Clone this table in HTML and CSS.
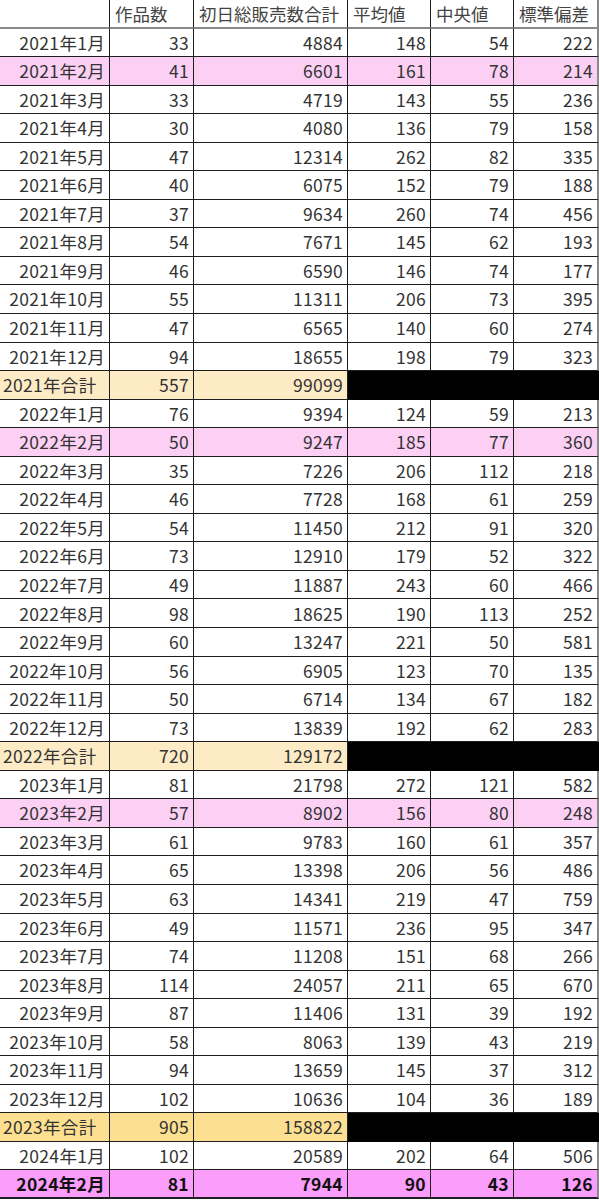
FILE: index.html
```html
<!DOCTYPE html>
<html lang="ja">
<head>
<meta charset="utf-8">
<link rel="stylesheet" href="styles.css">
</head>
<body>
<div class="sheet">
  <div class="row head"><div class="c"></div><div class="c">作品数</div><div class="c">初日総販売数合計</div><div class="c">平均値</div><div class="c">中央値</div><div class="c">標準偏差</div></div>

  <div class="row"><div class="c">2021年1月</div><div class="c">33</div><div class="c">4884</div><div class="c">148</div><div class="c">54</div><div class="c">222</div></div>
  <div class="row pink"><div class="c">2021年2月</div><div class="c">41</div><div class="c">6601</div><div class="c">161</div><div class="c">78</div><div class="c">214</div></div>
  <div class="row"><div class="c">2021年3月</div><div class="c">33</div><div class="c">4719</div><div class="c">143</div><div class="c">55</div><div class="c">236</div></div>
  <div class="row"><div class="c">2021年4月</div><div class="c">30</div><div class="c">4080</div><div class="c">136</div><div class="c">79</div><div class="c">158</div></div>
  <div class="row"><div class="c">2021年5月</div><div class="c">47</div><div class="c">12314</div><div class="c">262</div><div class="c">82</div><div class="c">335</div></div>
  <div class="row"><div class="c">2021年6月</div><div class="c">40</div><div class="c">6075</div><div class="c">152</div><div class="c">79</div><div class="c">188</div></div>
  <div class="row"><div class="c">2021年7月</div><div class="c">37</div><div class="c">9634</div><div class="c">260</div><div class="c">74</div><div class="c">456</div></div>
  <div class="row"><div class="c">2021年8月</div><div class="c">54</div><div class="c">7671</div><div class="c">145</div><div class="c">62</div><div class="c">193</div></div>
  <div class="row"><div class="c">2021年9月</div><div class="c">46</div><div class="c">6590</div><div class="c">146</div><div class="c">74</div><div class="c">177</div></div>
  <div class="row"><div class="c">2021年10月</div><div class="c">55</div><div class="c">11311</div><div class="c">206</div><div class="c">73</div><div class="c">395</div></div>
  <div class="row"><div class="c">2021年11月</div><div class="c">47</div><div class="c">6565</div><div class="c">140</div><div class="c">60</div><div class="c">274</div></div>
  <div class="row"><div class="c">2021年12月</div><div class="c">94</div><div class="c">18655</div><div class="c">198</div><div class="c">79</div><div class="c">323</div></div>
  <div class="row total"><div class="c">2021年合計</div><div class="c">557</div><div class="c">99099</div><div class="c blk"></div><div class="c blk"></div><div class="c blk"></div></div>

  <div class="row"><div class="c">2022年1月</div><div class="c">76</div><div class="c">9394</div><div class="c">124</div><div class="c">59</div><div class="c">213</div></div>
  <div class="row pink"><div class="c">2022年2月</div><div class="c">50</div><div class="c">9247</div><div class="c">185</div><div class="c">77</div><div class="c">360</div></div>
  <div class="row"><div class="c">2022年3月</div><div class="c">35</div><div class="c">7226</div><div class="c">206</div><div class="c">112</div><div class="c">218</div></div>
  <div class="row"><div class="c">2022年4月</div><div class="c">46</div><div class="c">7728</div><div class="c">168</div><div class="c">61</div><div class="c">259</div></div>
  <div class="row"><div class="c">2022年5月</div><div class="c">54</div><div class="c">11450</div><div class="c">212</div><div class="c">91</div><div class="c">320</div></div>
  <div class="row"><div class="c">2022年6月</div><div class="c">73</div><div class="c">12910</div><div class="c">179</div><div class="c">52</div><div class="c">322</div></div>
  <div class="row"><div class="c">2022年7月</div><div class="c">49</div><div class="c">11887</div><div class="c">243</div><div class="c">60</div><div class="c">466</div></div>
  <div class="row"><div class="c">2022年8月</div><div class="c">98</div><div class="c">18625</div><div class="c">190</div><div class="c">113</div><div class="c">252</div></div>
  <div class="row"><div class="c">2022年9月</div><div class="c">60</div><div class="c">13247</div><div class="c">221</div><div class="c">50</div><div class="c">581</div></div>
  <div class="row"><div class="c">2022年10月</div><div class="c">56</div><div class="c">6905</div><div class="c">123</div><div class="c">70</div><div class="c">135</div></div>
  <div class="row"><div class="c">2022年11月</div><div class="c">50</div><div class="c">6714</div><div class="c">134</div><div class="c">67</div><div class="c">182</div></div>
  <div class="row"><div class="c">2022年12月</div><div class="c">73</div><div class="c">13839</div><div class="c">192</div><div class="c">62</div><div class="c">283</div></div>
  <div class="row total"><div class="c">2022年合計</div><div class="c">720</div><div class="c">129172</div><div class="c blk"></div><div class="c blk"></div><div class="c blk"></div></div>

  <div class="row"><div class="c">2023年1月</div><div class="c">81</div><div class="c">21798</div><div class="c">272</div><div class="c">121</div><div class="c">582</div></div>
  <div class="row pink"><div class="c">2023年2月</div><div class="c">57</div><div class="c">8902</div><div class="c">156</div><div class="c">80</div><div class="c">248</div></div>
  <div class="row"><div class="c">2023年3月</div><div class="c">61</div><div class="c">9783</div><div class="c">160</div><div class="c">61</div><div class="c">357</div></div>
  <div class="row"><div class="c">2023年4月</div><div class="c">65</div><div class="c">13398</div><div class="c">206</div><div class="c">56</div><div class="c">486</div></div>
  <div class="row"><div class="c">2023年5月</div><div class="c">63</div><div class="c">14341</div><div class="c">219</div><div class="c">47</div><div class="c">759</div></div>
  <div class="row"><div class="c">2023年6月</div><div class="c">49</div><div class="c">11571</div><div class="c">236</div><div class="c">95</div><div class="c">347</div></div>
  <div class="row"><div class="c">2023年7月</div><div class="c">74</div><div class="c">11208</div><div class="c">151</div><div class="c">68</div><div class="c">266</div></div>
  <div class="row"><div class="c">2023年8月</div><div class="c">114</div><div class="c">24057</div><div class="c">211</div><div class="c">65</div><div class="c">670</div></div>
  <div class="row"><div class="c">2023年9月</div><div class="c">87</div><div class="c">11406</div><div class="c">131</div><div class="c">39</div><div class="c">192</div></div>
  <div class="row"><div class="c">2023年10月</div><div class="c">58</div><div class="c">8063</div><div class="c">139</div><div class="c">43</div><div class="c">219</div></div>
  <div class="row"><div class="c">2023年11月</div><div class="c">94</div><div class="c">13659</div><div class="c">145</div><div class="c">37</div><div class="c">312</div></div>
  <div class="row"><div class="c">2023年12月</div><div class="c">102</div><div class="c">10636</div><div class="c">104</div><div class="c">36</div><div class="c">189</div></div>
  <div class="row total strong"><div class="c">2023年合計</div><div class="c">905</div><div class="c">158822</div><div class="c blk"></div><div class="c blk"></div><div class="c blk"></div></div>

  <div class="row"><div class="c">2024年1月</div><div class="c">102</div><div class="c">20589</div><div class="c">202</div><div class="c">64</div><div class="c">506</div></div>
  <div class="row latest"><div class="c">2024年2月</div><div class="c">81</div><div class="c">7944</div><div class="c">90</div><div class="c">43</div><div class="c">126</div></div>
</div>
</body>
</html>
```

FILE: styles.css
```css
html, body {
  margin: 0;
  padding: 0;
  background: #ffffff;
}

.sheet {
  width: 599px;
  font-family: "Noto Sans CJK JP", "Noto Sans", sans-serif;
  font-size: 17.5px;
  color: #333333;
}

.row {
  display: grid;
  grid-template-columns: 110px 84px 154px 83px 83px 85px;
  height: 28.55px;
}

.c {
  box-sizing: border-box;
  border-right: 1px solid #1e1e1e;
  border-bottom: 1px solid #1e1e1e;
  display: flex;
  align-items: center;
  justify-content: flex-end;
  padding: 0 4px 0 4px;
  white-space: nowrap;
  line-height: 1;
  overflow: hidden;
  letter-spacing: 0.3px;
}

.c:last-child {
  border-right: 2px solid #8a8a8a;
}

.head .c {
  justify-content: flex-start;
  padding-left: 5px;
  border-bottom: 2px solid #8a8a8a;
  color: #444444;
  letter-spacing: 0;
}

.head .c:first-child {
  border-right-color: #1e1e1e;
}

.pink .c {
  background: #fbd0f4;
}

.total .c {
  background: #fdebc6;
}

.total .c:first-child {
  justify-content: flex-start;
  padding-left: 3px;
}

.total.strong .c {
  background: #fcdf91;
}

.total .c.blk {
  background: #000000;
  border-color: #000000;
}

.latest .c {
  background: #fb9dfb;
  font-weight: bold;
  color: #111111;
  border-bottom: 2px solid #1e1e1e;
}
```
